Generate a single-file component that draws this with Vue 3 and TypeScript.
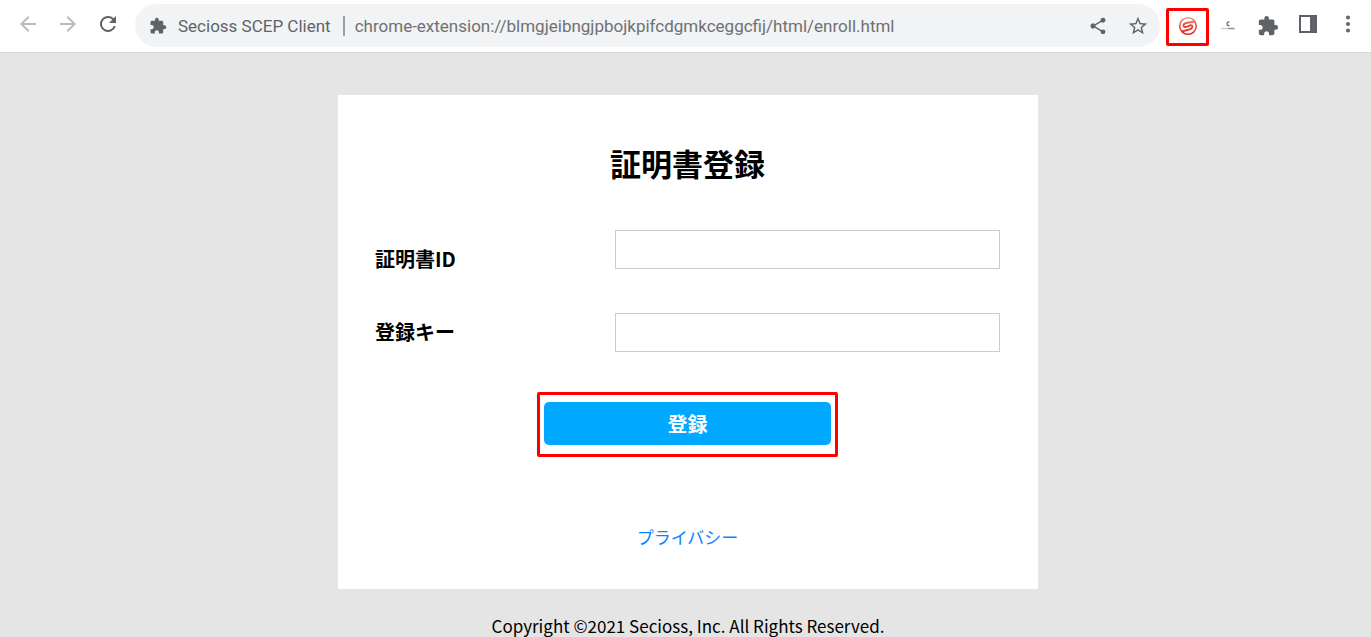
<script setup lang="ts">
import { ref } from 'vue'

const certificateId = ref('')
const enrollKey = ref('')
const puzzle = 'M20.5 11H19V7c0-1.1-.9-2-2-2h-4V3.500a2.500 2.500 0 0 0-5 0V5H4c-1.100 0-1.990.9-1.990 2v3.800H3.500c1.490 0 2.700 1.210 2.700 2.700s-1.210 2.700-2.700 2.700H2V20c0 1.100.9 2 2 2h3.800v-1.500c0-1.490 1.210-2.700 2.700-2.700s2.700 1.210 2.700 2.700V22H17c1.100 0 2-.9 2-2v-4h1.500a2.500 2.500 0 0 0 0-5z'
</script>

<template>
  <div class="page">
    <header class="toolbar">
      <nav class="nav" aria-label="Navigation">
        <button class="icon muted" type="button" aria-label="Back">
          <svg viewBox="0 0 24 24"><path d="M20 11H7.830l5.590-5.590L12 4l-8 8 8 8 1.410-1.410L7.830 13H20v-2z" /></svg>
        </button>
        <button class="icon muted" type="button" aria-label="Forward">
          <svg viewBox="0 0 24 24"><path d="M12 4l-1.410 1.410L16.170 11H4v2h12.170l-5.580 5.590L12 20l8-8z" /></svg>
        </button>
        <button class="icon" type="button" aria-label="Reload">
          <svg viewBox="0 0 24 24"><path d="M17.650 6.350A8 8 0 1 0 19.730 14h-2.080A6 6 0 1 1 12 6c1.660 0 3.140.69 4.220 1.780L13 11h7V4z" /></svg>
        </button>
      </nav>
      <div class="omnibox">
        <svg class="site-icon" viewBox="0 0 24 24" aria-hidden="true"><path :d="puzzle" /></svg>
        <span class="site-name">Secioss SCEP Client</span>
        <span class="divider"></span>
        <span class="url">chrome-extension://blmgjeibngjpbojkpifcdgmkceggcfij/html/enroll.html</span>
        <button class="icon small" type="button" aria-label="Share">
          <svg viewBox="0 0 24 24"><path d="M18 16.080c-.76 0-1.440.3-1.960.77L8.910 12.700c.05-.23.09-.46.09-.7s-.04-.47-.09-.7l7.050-4.110A3 3 0 1 0 15 5c0 .24.040.47.09.7L8.040 9.810a3 3 0 1 0 0 4.380l7.120 4.160c-.05.21-.08.43-.08.65A2.920 2.920 0 1 0 18 16.080z" /></svg>
        </button>
        <button class="icon small star" type="button" aria-label="Bookmark">
          <svg viewBox="0 0 24 24"><path d="M22 9.240l-7.190-.62L12 2 9.190 8.630 2 9.240l5.460 4.730L5.820 21 12 17.270 18.180 21l-1.630-7.030zM12 15.400l-3.760 2.270 1-4.280-3.320-2.880 4.380-.38L12 6.100l1.710 4.040 4.380.38-3.320 2.880 1 4.280z" /></svg>
        </button>
      </div>
      <div class="extensions">
        <button class="icon marked" type="button" aria-label="Secioss SCEP Client">
          <svg viewBox="0 0 20 20">
            <defs>
              <linearGradient id="brand" gradientUnits="userSpaceOnUse" x1="10" y1="1" x2="10" y2="19">
                <stop offset="0" stop-color="#f29a90" />
                <stop offset=".5" stop-color="#e94135" />
                <stop offset="1" stop-color="#e7271c" />
              </linearGradient>
            </defs>
            <circle cx="10" cy="10" r="8.300" fill="none" stroke="url(#brand)" stroke-width="1.500" />
            <path d="M16.500 5.500L8 7Q5 8 5.500 10Q6 11.500 8.500 10.800L12.500 9.300Q14.800 9 14.300 11Q13.800 12.800 11.500 13.400L3.800 15.500" fill="none" stroke="url(#brand)" stroke-width="1.900" />
          </svg>
        </button>
        <button class="icon" type="button" aria-label="CloudGate">
          <svg viewBox="0 0 20 20">
            <path d="M11.500 6Q9 5.500 9 8Q9 10 11.500 9.500" fill="none" stroke="#666" stroke-width="1.200" />
            <path d="M3 12.500h8" stroke="#c8ced4" stroke-width="1.500" />
            <path d="M10.500 12.500h6" stroke="#8a8a8a" stroke-width="1.500" />
          </svg>
        </button>
        <button class="icon puzzle" type="button" aria-label="Extensions">
          <svg viewBox="0 0 24 24"><path :d="puzzle" /></svg>
        </button>
      </div>
      <div class="window-tools">
        <button class="icon" type="button" aria-label="Side panel">
          <svg viewBox="0 0 20 20"><path fill-rule="evenodd" d="M1 1h18v18H1zM3 3v14h9V3z" /></svg>
        </button>
        <button class="icon" type="button" aria-label="Menu">
          <svg viewBox="0 0 20 20"><circle cx="10" cy="3.500" r="2" /><circle cx="10" cy="10" r="2" /><circle cx="10" cy="16.500" r="2" /></svg>
        </button>
      </div>
    </header>

    <main class="content">
      <form class="card" @submit.prevent>
        <h1>証明書登録</h1>
        <div class="fields">
          <div class="field">
            <label for="certificate-id">証明書ID</label>
            <input id="certificate-id" v-model="certificateId" type="text" />
          </div>
          <div class="field">
            <label for="enroll-key">登録キー</label>
            <input id="enroll-key" v-model="enrollKey" type="text" />
          </div>
        </div>
        <div class="submit-frame">
          <button class="submit" type="submit">登録</button>
        </div>
        <a class="privacy" href="#">プライバシー</a>
      </form>
      <footer>Copyright ©2021 Secioss, Inc. All Rights Reserved.</footer>
    </main>
  </div>
</template>

<style>
body {
  margin: 0;
  background: #e5e5e5;
}
</style>

<style scoped>
.page {
  min-height: 100vh;
  display: flex;
  flex-direction: column;
  color: #000;
  font-family: "Noto Sans CJK JP", sans-serif;
}
* {
  box-sizing: border-box;
}
button {
  border: 0;
  padding: 0;
  font-family: inherit;
  cursor: pointer;
}
.toolbar {
  flex: none;
  display: flex;
  height: 53px;
  padding: 4px 11px 4px 16px;
  background: #fff;
  border-bottom: 1px solid #d9d9d9;
  font-family: Roboto, sans-serif;
}
.nav {
  display: flex;
  align-items: center;
  height: 40px;
  gap: 16px;
  margin-right: 15px;
}
.icon {
  display: flex;
  align-items: center;
  justify-content: center;
  flex: none;
  width: 24px;
  height: 24px;
  background: none;
}
.icon svg {
  width: 24px;
  height: 24px;
  fill: #5f6368;
}
.muted svg {
  fill: #babcbe;
}
.omnibox {
  flex: 1;
  min-width: 0;
  display: flex;
  align-items: center;
  height: 43px;
  padding: 0 10px 0 14px;
  border-radius: 22px;
  background: #f1f3f4;
  color: #5f6368;
  font-size: 17px;
  white-space: nowrap;
}
.site-icon {
  flex: none;
  width: 18px;
  height: 18px;
  fill: #5f6368;
}
.site-name {
  margin-left: 11px;
}
.divider {
  flex: none;
  width: 2px;
  height: 20px;
  margin: 0 10px 0 12px;
  background: #9aa0a6;
}
.url {
  flex: 1;
  min-width: 0;
  overflow: hidden;
  color: #6f7173;
}
.small {
  margin-left: 16px;
}
.small svg {
  width: 20px;
  height: 20px;
}
.star svg {
  width: 22px;
  height: 22px;
}
.extensions,
.window-tools {
  display: flex;
  align-items: center;
  gap: 16px;
}
.extensions {
  height: 43px;
  margin-left: 6px;
}
.window-tools {
  height: 40px;
  margin-left: 16px;
}
.extensions svg,
.window-tools svg {
  width: 20px;
  height: 20px;
}
.extensions .puzzle svg {
  width: 22px;
  height: 22px;
}
.extensions .marked {
  width: 43px;
  height: 38px;
  margin: 2px -9px 0 0;
  padding-bottom: 2px;
  border: 3px solid #f00;
  border-radius: 2px;
}
.content {
  padding: 42px 20px 0 25px;
}
.card {
  display: flex;
  flex-direction: column;
  width: 100%;
  max-width: 700px;
  margin: 0 auto;
  padding: 44px 38px 40px 37px;
  background: #fff;
}
h1 {
  margin: 0 0 43px;
  font-size: 31px;
  line-height: 48px;
  text-align: center;
}
.fields {
  display: grid;
  grid-template-rows: 43px auto;
  row-gap: 40px;
  margin-bottom: 40px;
}
.field {
  display: grid;
  grid-template-columns: 240px 1fr;
  align-items: start;
}
.field label {
  padding-top: 7px;
  font-size: 20px;
  line-height: 24px;
  font-weight: 700;
}
.field:first-child label {
  padding-top: 17px;
}
.field input {
  width: 100%;
  height: 39px;
  padding: 0 8px;
  border: 1px solid #ccc;
  border-radius: 0;
  font-size: 18px;
}
.submit-frame {
  align-self: center;
  padding: 7px 4px 9px;
  border: 3px solid #f00;
  border-radius: 2px;
}
.submit {
  display: block;
  width: 287px;
  height: 43px;
  border-radius: 5px;
  background: #00a8ff;
  color: #fff;
  font-size: 20px;
  font-weight: 700;
}
.privacy {
  align-self: center;
  margin-top: 68px;
  color: #0a84ff;
  font-size: 17px;
  line-height: 24px;
  text-decoration: none;
}
footer {
  margin-top: 27px;
  font-size: 17px;
  line-height: 20px;
  text-align: center;
}
</style>
